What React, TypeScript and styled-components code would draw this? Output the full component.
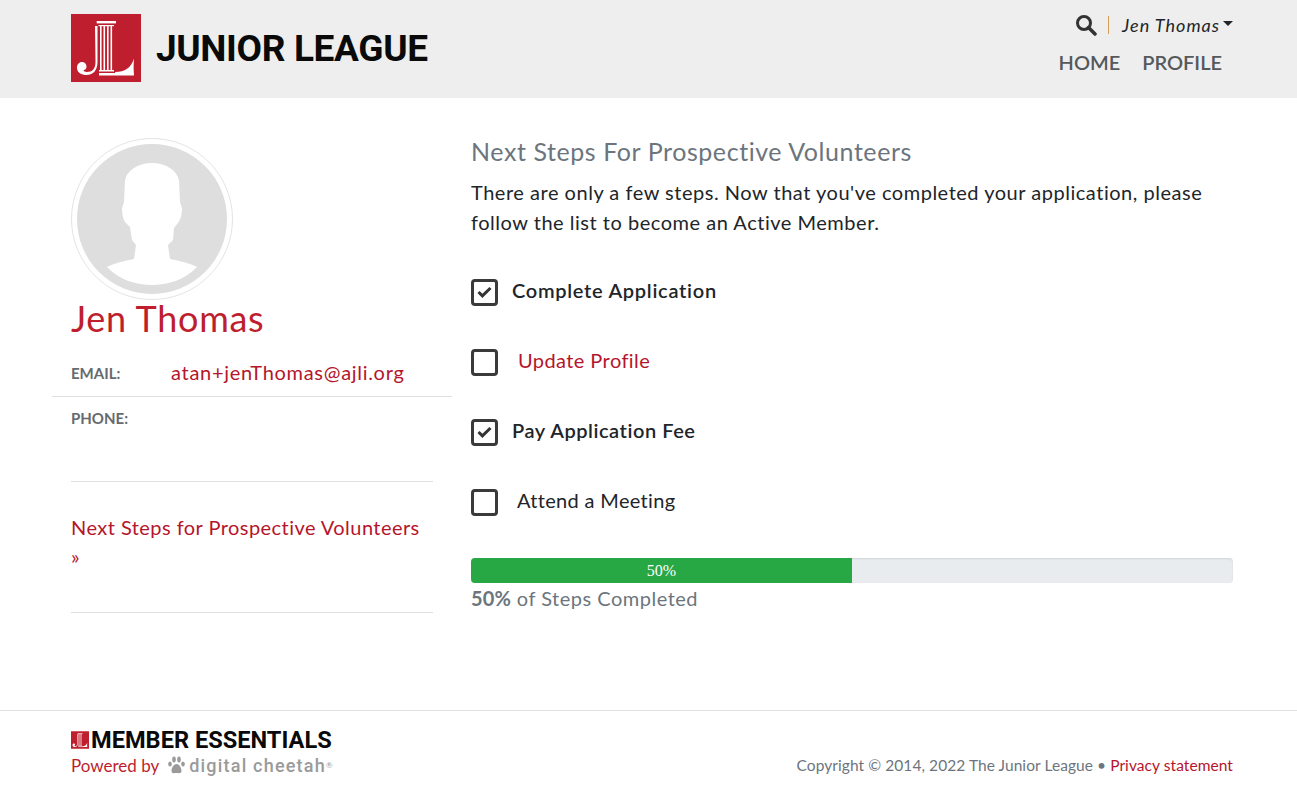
import React from 'react';
import styled, { createGlobalStyle } from 'styled-components';

const Global = createGlobalStyle`
  html, body { margin: 0; padding: 0; background: #fff; }
  body { font-family: Lato, "Open Sans", sans-serif; color: #212529; font-size: 20px; }
  * { box-sizing: border-box; }
`;
const Page = styled.div`width: 1297px; height: 789px; overflow: hidden; display: flex; flex-direction: column;`;
const Header = styled.header`
  height: 98px; background: #eeeeee; padding: 14px 64px 0 71px; display: flex; justify-content: space-between; flex: none;
`;
const Brand = styled.div`display: flex; align-items: flex-start; gap: 15px;`;
const BrandName = styled.span`
  font-family: Roboto, sans-serif; font-weight: 700; font-size: 37px; line-height: 70px; color: #0a0a0a; letter-spacing: -.35px; white-space: nowrap;
`;
const HeaderRight = styled.div`display: flex; flex-direction: column; align-items: flex-end;`;
const UserRow = styled.div`display: flex; align-items: center; height: 22px;`;
const Divider = styled.span`width: 1px; height: 18px; background: #d39a5a; margin: 0 13px 0 11px;`;
const UserName = styled.span`font-style: italic; font-size: 18px; color: #212529; letter-spacing: 1px;`;
const Caret = styled.span`
  width: 0; height: 0; margin-left: 3px; margin-bottom: 3px;
  border-left: 5px solid transparent; border-right: 5px solid transparent; border-top: 5px solid #212529;
`;
const Nav = styled.nav`display: flex; gap: 22px; padding: 14px 11px 0 0;`;
const NavLink = styled.a`font-size: 20px; line-height: 24px; font-weight: 600; color: #55595c;`;
const Main = styled.main`display: flex; flex: 1; padding: 40px 0 0 52px;`;
const Side = styled.aside`width: 400px; flex: none;`;
const Avatar = styled.div`
  margin-left: 19px; width: 162px; height: 162px; border-radius: 50%; border: 1px solid #e4e4e4; display: flex; align-items: center; justify-content: center;
`;
const Name = styled.h1`margin: -2px 0 20px 19px; font-size: 36px; line-height: 40px; font-weight: 400; color: #be1e2d; letter-spacing: .7px;`;
const InfoRow = styled.div<{ $line?: boolean; $h: number; $pad?: number }>`
  display: flex; padding-left: 19px; height: ${p => p.$h}px; align-items: flex-start; padding-top: ${p => p.$pad || 0}px;
  border-bottom: ${p => (p.$line ? '1px solid #dfdfdf' : '0')};
`;
const Label = styled.span`width: 100px; font-size: 15px; line-height: 30px; font-weight: 700; color: #666a6e;`;
const RedLink = styled.a`color: #b5152b; font-size: 20px; line-height: 28px; letter-spacing: .7px;`;
const SideNav = styled.div`
  margin: 0 19px; height: 132px; padding-top: 31px; border-top: 1px solid #dfdfdf; border-bottom: 1px solid #dfdfdf;
  font-size: 20px; line-height: 29px; color: #b5152b; letter-spacing: .45px;
`;
const Content = styled.section`width: 800px; padding: 0 19px;`;
const Title = styled.h2`margin: 0; font-size: 25px; line-height: 26px; font-weight: 400; color: #6c757d; letter-spacing: .57px;`;
const Intro = styled.p`margin: 13px 0 0; font-size: 20px; line-height: 30px; color: #212529; letter-spacing: .52px;`;
const Steps = styled.div`margin-top: 38px; display: flex; flex-direction: column; gap: 40px;`;
const Step = styled.div`display: flex; align-items: center; height: 30px;`;
const Box = styled.span`
  width: 27px; height: 27px; border: 3px solid #3a3a3a; border-radius: 4px; display: flex; align-items: center; justify-content: center; flex: none; margin-top: 4px;
`;
const StepText = styled.span<{ $bold?: boolean; $red?: boolean; $gap: number; $spacing: number }>`
  margin-left: ${p => p.$gap}px; font-size: 20px; letter-spacing: ${p => p.$spacing}px; font-weight: ${p => (p.$bold ? 600 : 400)}; color: ${p => (p.$red ? '#b5152b' : '#212529')};
`;
const Progress = styled.div`margin-top: 43px; height: 25px; background: #e9ecef; border-radius: 4px; overflow: hidden; display: flex; box-shadow: inset 0 1px 2px rgba(0,0,0,.1);`;
const Bar = styled.div`
  background: #28a745; color: #fff; text-align: center; font-family: "Liberation Serif", serif; font-size: 16px; line-height: 25px;
`;
const ProgressText = styled.div`font-size: 20px; line-height: 30px; color: #6c757d; letter-spacing: .5px; strong { font-weight: 700; letter-spacing: .2px; }`;
const Footer = styled.footer`
  height: 79px; flex: none; border-top: 1px solid #dfdfdf; padding: 18px 64px 0 71px; display: flex; justify-content: space-between;
`;
const FootLeft = styled.div`display: flex; flex-direction: column;`;
const Essentials = styled.div`display: flex; align-items: center; gap: 2px; height: 22px;`;
const EssName = styled.span`font-family: Roboto, sans-serif; font-weight: 700; font-size: 23.6px; color: #0a0a0a; line-height: 22px; white-space: nowrap;`;
const Powered = styled.div`display: flex; align-items: center; height: 26px; margin-top: 1px;`;
const PoweredText = styled.span`font-size: 17px; color: #be1e2d; margin-right: 9px;`;
const Cheetah = styled.span`font-family: Roboto, sans-serif; font-weight: 500; font-size: 18px; color: #9a9a9a; margin-left: 4px; letter-spacing: 1.2px; white-space: nowrap;`;
const Reg = styled.sup`font-size: 8px; color: #9a9a9a; line-height: 0;`;
const Copy = styled.div`font-size: 15.5px; color: #6c757d; padding-top: 27px; letter-spacing: .07px; a { color: #b5152b; }`;

const Logo = ({ w, h }: { w: number; h: number }) => (
  <svg width={w} height={h} viewBox="0 0 70 68" style={{ flex: 'none' }}>
    <rect width="70" height="68" fill="#be1e2d" />
    <g fill="#fff">
      <rect x="25.700" y="7" width="19.300" height="2.400" />
      <rect x="27.500" y="11" width="15.500" height="1.200" />
      <rect x="29" y="12" width="1.600" height="44" />
      <rect x="32.500" y="12" width="1.600" height="44" />
      <rect x="36" y="12" width="1.600" height="44" />
      <rect x="39.500" y="12" width="1.600" height="44" />
      <rect x="28" y="56" width="15" height="1.500" />
      <rect x="28" y="59" width="17" height="2.500" />
      <path d="M24 12h2.500v36c0 9-5 13-11 13-5 0-9.500-2.500-9.500-7 0-3.500 2-6 5-6 2.500 0 4.500 2 4.500 4.500 0 2-1 3.500-3 3.500 0 1 1.500 2 3.500 2 5 0 8.500-3 8.500-10z" />
      <path d="M44 58c10 0 16-4 19-13.500-.5 6-.5 11 0 17H45z" />
    </g>
  </svg>
);

const Silhouette = () => (
  <svg width="150" height="150" viewBox="0 0 150 150">
    <circle cx="75" cy="75" r="75" fill="#dedede" />
    <path fill="#fff" d="M75 19C60 19 50 27 48 36L47 58L45 64C45 70 46 75 48 78L53 83L55 96L59 101L57 115C47 117 38 119 30 123C42 136 60 141 75 141C90 141 108 136 120 123C112 119 103 117 93 115L91 101L96 96L97 84L101 79C104 75 105 70 105 64L103 58L102 36C100 27 90 19 75 19Z" />
  </svg>
);

const Check = () => (
  <svg width="15" height="12" viewBox="0 0 15 12"><path d="M1.500 6l3.900 3.900L13.500 2" fill="none" stroke="#333" strokeWidth="3" /></svg>
);

const Search = () => (
  <svg width="22" height="22" viewBox="0 0 22 22"><circle cx="9" cy="9" r="6.500" fill="none" stroke="#333" strokeWidth="3" /><path d="M13.500 13.500L20 20" stroke="#333" strokeWidth="3.500" strokeLinecap="round" /></svg>
);

const Paw = () => (
  <svg width="17" height="19" viewBox="0 0 17 19" fill="#9a9a9a">
    <ellipse cx="6" cy="3.500" rx="1.800" ry="3" /><ellipse cx="11" cy="3.500" rx="1.800" ry="3" />
    <ellipse cx="2" cy="8" rx="1.800" ry="2.500" /><ellipse cx="15" cy="8" rx="1.800" ry="2.500" />
    <path d="M8.500 8c3 0 5 4 5 7 0 3-3 2-5 2s-5 1-5-2c0-3 2-7 5-7z" />
  </svg>
);

const steps = [
  { text: 'Complete Application', done: true, bold: true, gap: 14, spacing: 0.72 },
  { text: 'Update Profile', done: false, red: true, gap: 20, spacing: 0.42 },
  { text: 'Pay Application Fee', done: true, bold: true, gap: 14, spacing: 0.55 },
  { text: 'Attend a Meeting', done: false, gap: 19, spacing: 0.33 },
];

export default function App() {
  return (
    <Page>
      <Global />
      <Header>
        <Brand>
          <Logo w={70} h={68} />
          <BrandName>JUNIOR LEAGUE</BrandName>
        </Brand>
        <HeaderRight>
          <UserRow>
            <Search />
            <Divider />
            <UserName>Jen Thomas</UserName>
            <Caret />
          </UserRow>
          <Nav>
            <NavLink>HOME</NavLink>
            <NavLink>PROFILE</NavLink>
          </Nav>
        </HeaderRight>
      </Header>
      <Main>
        <Side>
          <Avatar><Silhouette /></Avatar>
          <Name>Jen Thomas</Name>
          <InfoRow $line $h={39}>
            <Label>EMAIL:</Label>
            <RedLink>atan+jenThomas@ajli.org</RedLink>
          </InfoRow>
          <InfoRow $h={84} $pad={6}>
            <Label>PHONE:</Label>
          </InfoRow>
          <SideNav>Next Steps for Prospective Volunteers<br />»</SideNav>
        </Side>
        <Content>
          <Title>Next Steps For Prospective Volunteers</Title>
          <Intro>There are only a few steps. Now that you've completed your application, please follow the list to become an Active Member.</Intro>
          <Steps>
            {steps.map(s => (
              <Step key={s.text}>
                <Box>{s.done && <Check />}</Box>
                <StepText $bold={s.bold} $red={s.red} $gap={s.gap} $spacing={s.spacing}>{s.text}</StepText>
              </Step>
            ))}
          </Steps>
          <Progress><Bar style={{ width: '50%' }}>50%</Bar></Progress>
          <ProgressText><strong>50%</strong> of Steps Completed</ProgressText>
        </Content>
      </Main>
      <Footer>
        <FootLeft>
          <Essentials><Logo w={18} h={18} /><EssName>MEMBER ESSENTIALS</EssName></Essentials>
          <Powered>
            <PoweredText>Powered by</PoweredText>
            <Paw />
            <Cheetah>digital cheetah</Cheetah><Reg>®</Reg>
          </Powered>
        </FootLeft>
        <Copy>Copyright © 2014, 2022 The Junior League • <a>Privacy statement</a></Copy>
      </Footer>
    </Page>
  );
}
